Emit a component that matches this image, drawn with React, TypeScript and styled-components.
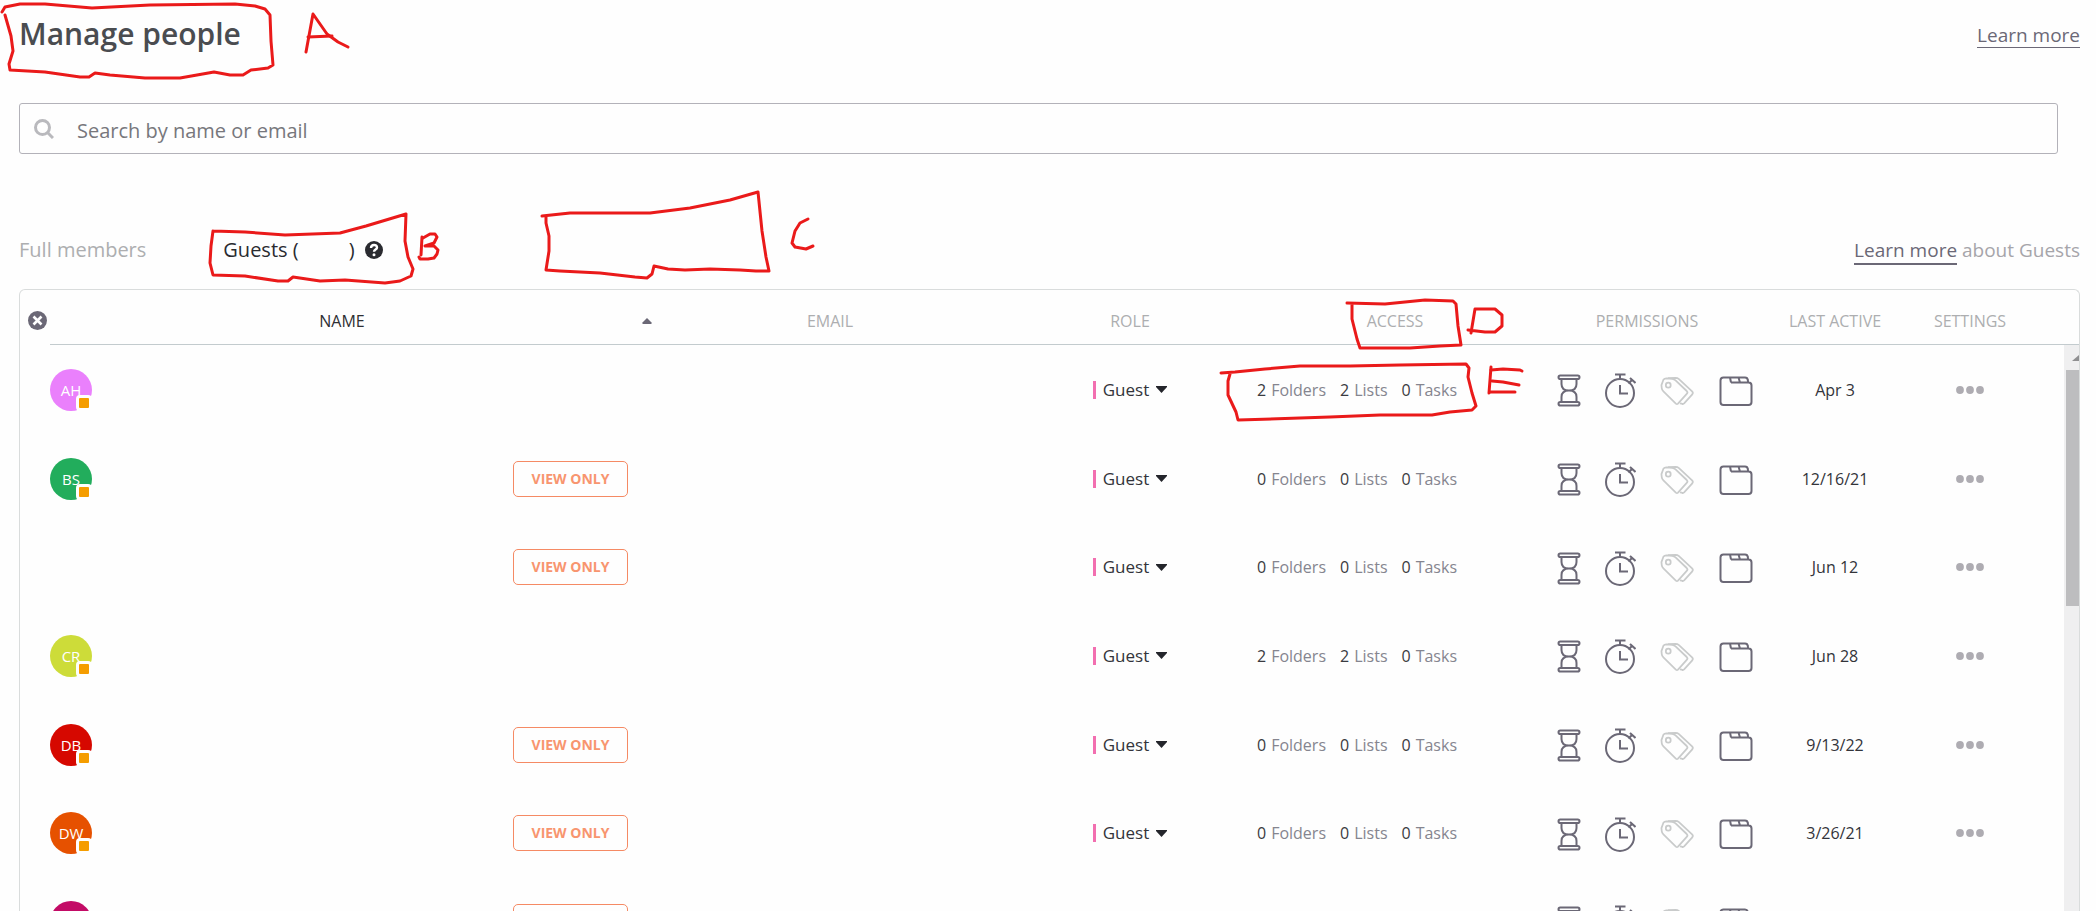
import React from "react";
import styled, { createGlobalStyle } from "styled-components";

const ink = "#6b6876";

const GlobalStyle = createGlobalStyle`
  * { box-sizing: border-box; }
  body { margin: 0; background: #fefefe; font-family: "Open Sans", "Noto Sans", sans-serif; color: #33343a; }
  button { display: flex; align-items: center; font: inherit; color: inherit; background: none; border: 0; padding: 0; cursor: pointer; }
`;

const Page = styled.div`
  position: relative;
  display: flex;
  flex-direction: column;
  height: 100vh;
  overflow: hidden;
  padding: 0 16px 0 19px;
`;

const Header = styled.header`
  display: flex;
  justify-content: space-between;
  align-items: center;
  height: 70px;
  flex: none;
`;

const Title = styled.h1`
  margin: 0;
  padding-bottom: 2px;
  font-size: 30px;
  line-height: 40px;
  font-weight: 600;
  color: #4a4c50;
`;

const LearnLink = styled.a<{ $weight: number }>`
  font-size: 19px;
  line-height: 24px;
  color: ${ink};
  text-decoration: none;
  border-bottom: ${(p) => p.$weight}px solid ${ink};
`;

const SearchBox = styled.label`
  display: flex;
  align-items: center;
  flex: none;
  gap: 23px;
  height: 51px;
  margin: 33px 22px 0 0;
  padding: 0 14px;
  border: 1px solid #b3b2b9;
  border-radius: 3px;
`;

const SearchInput = styled.input`
  flex: 1;
  border: 0;
  outline: 0;
  padding: 3px 0 0;
  background: none;
  font: inherit;
  font-size: 20px;
  &::placeholder { color: #77777c; opacity: 1; }
`;

const TabBar = styled.nav`
  display: flex;
  align-items: center;
  flex: none;
  height: 78px;
  margin-top: 57px;
  font-size: 20px;
  line-height: 28px;
`;

const Tab = styled.button<{ $active?: boolean }>`
  margin-right: 77px;
  color: ${(p) => (p.$active ? "#2a2b30" : "#adaeb0")};
`;

const HiddenCount = styled.span`
  width: 50px;
`;

const TabNote = styled.span`
  margin-left: auto;
  font-size: 19px;
  color: #a6a5aa;
`;

const Panel = styled.section`
  position: relative;
  flex: 1;
  min-height: 0;
  border: 1px solid #d9dcdc;
  border-bottom: 0;
  border-radius: 6px 6px 0 0;
`;

const ClearButton = styled.button`
  position: absolute;
  top: 21px;
  left: 8px;
`;

const Table = styled.table`
  display: block;
  height: 100%;
  overflow: hidden;
  margin-left: 30px;
`;

const THead = styled.thead`
  display: block;
`;

const TBody = styled.tbody`
  display: block;
`;

const Row = styled.tr`
  display: grid;
  grid-template-columns: minmax(0, 602fr) minmax(0, 356fr) 244px 286px 218px 158px 112px 53px;
  align-items: center;
  height: 89px;
  &:nth-child(3n) { height: 88px; }
`;

const HeadRow = styled(Row)`
  height: 55px;
  padding-top: 8px;
  border-bottom: 1px solid #c3cbce;
`;

const HeadCell = styled.th<{ $sorted?: boolean }>`
  display: flex;
  align-items: center;
  padding: 0;
  font-size: 16px;
  line-height: 20px;
  font-weight: 400;
  color: ${(p) => (p.$sorted ? "#2e2f33" : "#adaeb0")};
  svg { margin-left: 8px; }
`;

const HeadLabel = styled.span`
  flex: 1;
  text-align: center;
`;

const Cell = styled.td`
  display: flex;
  align-items: center;
  justify-content: center;
  padding: 0;
  font-size: 17px;
  line-height: 24px;
`;

const NameCell = styled(Cell)`
  justify-content: space-between;
  padding-right: 24px;
`;

const Avatar = styled.span<{ $color: string }>`
  position: relative;
  display: flex;
  align-items: center;
  justify-content: center;
  width: 42px;
  height: 42px;
  border-radius: 50%;
  background: ${(p) => p.$color};
  color: #fff;
  font-size: 15px;
`;

const Badge = styled.span`
  position: absolute;
  right: 0;
  bottom: 0;
  width: 16px;
  height: 16px;
  border: 3px solid #fefefe;
  border-radius: 4px;
  background: #f59d00;
`;

const ViewOnly = styled.button`
  justify-content: center;
  width: 115px;
  height: 36px;
  margin-left: auto;
  border: 1px solid #f58a64;
  border-radius: 5px;
  color: #f8956f;
  font-size: 14px;
  font-weight: 700;
`;

const RoleButton = styled.button`
  gap: 7px;
  &::before {
    content: "";
    width: 3px;
    height: 18px;
    background: #f26fb0;
  }
`;

const AccessCell = styled(Cell)`
  padding-right: 76px;
  font-size: 16px;
  gap: 14px;
`;

const AccessCount = styled.span`
  color: #85858f;
  b { font-weight: 400; color: #3a3b41; margin-right: 5px; }
`;

const PermissionsCell = styled(Cell)`
  display: grid;
  grid-template-columns: 25px 31px 35px 34px;
  column-gap: 24px;
  padding-left: 15px;
  button { justify-content: center; padding-top: 2px; }
`;

const DateCell = styled(Cell)`
  font-size: 16px;
`;

const Scrollbar = styled.div`
  position: absolute;
  top: 55px;
  right: 0;
  bottom: 0;
  width: 15px;
  padding-left: 2px;
  background: #efeff0;
`;

const ScrollArrow = styled.div`
  height: 25px;
  display: flex;
  justify-content: flex-end;
  padding-top: 10px;
`;

const ScrollThumb = styled.div`
  height: 236px;
  background: #bdbdbf;
`;

const Marks = styled.svg`
  position: absolute;
  top: 0;
  left: 0;
  pointer-events: none;
`;

const SearchIcon = () => (
  <svg width="20" height="20" viewBox="0 0 20 20" fill="none" stroke="#b9b9bd" strokeWidth="3">
    <circle cx="8.500" cy="8.500" r="7" />
    <path d="M13.500 13.500 19 19" />
  </svg>
);

const HelpIcon = () => (
  <svg width="18" height="18" viewBox="0 0 18 18">
    <circle cx="9" cy="9" r="9" fill="#2a2b30" />
    <path d="M6 7c0-4 6-4 6-.5C12 8.700 9 8.500 9 10.800" fill="none" stroke="#fff" strokeWidth="2.400" />
    <circle cx="9" cy="13.700" r="1.500" fill="#fff" />
  </svg>
);

const CloseIcon = () => (
  <svg width="19" height="19" viewBox="0 0 19 19">
    <circle cx="9.500" cy="9.500" r="9.500" fill={ink} />
    <path d="m5.500 5.500 8 8m0-8-8 8" stroke="#fff" strokeWidth="2.600" />
  </svg>
);

const SortIcon = () => (
  <svg width="10" height="6" viewBox="0 0 10 6">
    <path d="M5 0 9.500 4.500V6H.5V4.500z" fill={ink} />
  </svg>
);

const CaretIcon = () => (
  <svg width="11" height="7" viewBox="0 0 11 7">
    <path d="M0 0h11v1L5.500 7 0 1z" fill="#24252b" />
  </svg>
);

const HourglassIcon = () => (
  <svg width="24" height="33" viewBox="0 0 24 33" fill="none" stroke={ink} strokeWidth="2">
    <rect x="1.500" y="1.500" width="21" height="3.600" rx="1.800" />
    <rect x="1.500" y="28" width="21" height="3.600" rx="1.800" />
    <path d="M4.500 5.500V10q0 6.500 7.500 6.500t7.500-6.500V5.500M4.500 28v-5q0-6.500 7.500-6.500t7.500 6.500v5" />
  </svg>
);

const StopwatchIcon = () => (
  <svg width="31" height="35" viewBox="0 0 31 35" fill="none" stroke={ink} strokeWidth="2">
    <circle cx="15" cy="20" r="14" />
    <path d="M15 6V1.500M10 1.500h10.500M15 12v8.500h8M25 5l5.500 5M23.500 10.500l4-4" />
  </svg>
);

const TagsIcon = () => (
  <svg width="36" height="30" viewBox="0 0 36 30" fill="none" stroke="#c9cbcb" strokeWidth="1.800" strokeLinejoin="round">
    <path d="M1.500 9 3.500 3.500Q4.500 2 6.500 2l6 .5q2 .2 3.500 1.500l11.500 11q1.500 1.500 0 3l-9 10q-1 1-2.200 0L3.500 15.500Q2 14 1.800 12z" />
    <path d="m8 1.700 8-.2q2 0 3.500 1.300L33 15.500q1.500 1.500.2 3l-8.400 9.300q-1 1-2.300.2l-2-.2" />
    <circle cx="8.500" cy="9" r="2.500" />
  </svg>
);

const FolderIcon = () => (
  <svg width="34" height="30" viewBox="0 0 34 30" fill="none" stroke={ink} strokeWidth="2" strokeLinejoin="round">
    <path d="M12 6.500h17.500q3 0 3 3V26q0 3-3 3H4.500q-3 0-3-3V4.500q0-3 3-3H26q2.500 0 2.800 2.500l.4 2.500M12 6.500 11 1.500M21 6.500 19.500 1.500" />
  </svg>
);

const DotsIcon = () => (
  <svg width="28" height="8" viewBox="0 0 28 8" fill="#aeacb2">
    <circle cx="4" cy="4" r="3.900" />
    <circle cx="14" cy="4" r="3.900" />
    <circle cx="24" cy="4" r="3.900" />
  </svg>
);

const markStrokes = [
  "2,11 5,6 20,3 45,3 92,7 150,4 235,3 255,5 265,8 270,14 271,40 273,64 268,67 251,69 243,74 230,74 214,71 180,77 145,77 110,74 95,72 89,76 80,76 45,71 10,69 9,63 13,50 11,35 5,14",
  "306,51 313,13 327,33 338,41 348,46",
  "308,36 332,35",
  "213,230 245,231 285,234 340,232 366,225 406,213 405,240 408,256 413,268 411,275 400,280 385,282 345,279 320,280 293,276 288,280 278,280 245,275 213,274 210,262 211,245 213,230",
  "422,236 421,254",
  "423,237 430,233 435,233 437,236 434,242 425,245 434,245 438,249 437,253 434,257 428,258 420,258 419,256",
  "542,215 570,212 650,212 690,207 730,199 758,191 762,230 766,256 769,270 756,270 740,269 710,268 685,269 668,268 654,265 652,273 647,277 635,276 600,272 560,270 546,269 549,250 549,235 546,222 546,215",
  "808,218 800,222 795,230 792,242 795,246 806,248 813,245",
  "1347,302 1385,303 1425,299 1453,300 1456,303 1458,325 1461,344 1440,345 1410,347 1360,347 1357,338 1352,318 1352,303",
  "1471,332 1475,308 1495,308 1502,314 1502,325 1495,331 1485,331 1468,329",
  "1221,372 1235,371 1265,368 1300,365 1350,365 1400,364 1466,363 1469,367 1468,376 1472,392 1476,405 1472,409 1450,411 1432,414 1380,414 1330,416 1238,419 1236,411 1228,394 1228,380 1230,373",
  "1491,366 1489,392",
  "1491,369 1503,368 1520,369 1522,370",
  "1492,380 1503,381 1519,384",
  "1490,391 1515,391",
];

const AnnotationMarks = () => (
  <Marks width="1600" height="430" viewBox="0 -1 1600 430" fill="none" stroke="#ea1a1a" strokeWidth="3" strokeLinecap="round" strokeLinejoin="round" aria-hidden="true">
    {markStrokes.map((points) => (
      <polyline key={points} points={points} />
    ))}
  </Marks>
);

interface Access {
  folders: number;
  lists: number;
  tasks: number;
}

interface Guest {
  initials?: string;
  color?: string;
  viewOnly?: boolean;
  access: Access;
  lastActive: string;
}

const guests: Guest[] = [
  { initials: "AH", color: "#ea80fc", access: { folders: 2, lists: 2, tasks: 0 }, lastActive: "Apr 3" },
  { initials: "BS", color: "#22ad5c", viewOnly: true, access: { folders: 0, lists: 0, tasks: 0 }, lastActive: "12/16/21" },
  { viewOnly: true, access: { folders: 0, lists: 0, tasks: 0 }, lastActive: "Jun 12" },
  { initials: "CR", color: "#cddc39", access: { folders: 2, lists: 2, tasks: 0 }, lastActive: "Jun 28" },
  { initials: "DB", color: "#d60800", viewOnly: true, access: { folders: 0, lists: 0, tasks: 0 }, lastActive: "9/13/22" },
  { initials: "DW", color: "#e65100", viewOnly: true, access: { folders: 0, lists: 0, tasks: 0 }, lastActive: "3/26/21" },
];

const Permissions = () => (
  <PermissionsCell>
    <button aria-label="Time estimates"><HourglassIcon /></button>
    <button aria-label="Time tracking"><StopwatchIcon /></button>
    <button aria-label="Tags"><TagsIcon /></button>
    <button aria-label="Views"><FolderIcon /></button>
  </PermissionsCell>
);

const GuestRow = ({ guest }: { guest: Guest }) => (
  <Row>
    <NameCell>
      {guest.color && (
        <Avatar $color={guest.color}>
          {guest.initials}
          <Badge />
        </Avatar>
      )}
      {guest.viewOnly && <ViewOnly>VIEW ONLY</ViewOnly>}
    </NameCell>
    <Cell />
    <Cell>
      <RoleButton>
        Guest <CaretIcon />
      </RoleButton>
    </Cell>
    <AccessCell>
      <AccessCount><b>{guest.access.folders}</b>Folders</AccessCount>
      <AccessCount><b>{guest.access.lists}</b>Lists</AccessCount>
      <AccessCount><b>{guest.access.tasks}</b>Tasks</AccessCount>
    </AccessCell>
    <Permissions />
    <DateCell>{guest.lastActive}</DateCell>
    <Cell>
      <button aria-label="Settings"><DotsIcon /></button>
    </Cell>
  </Row>
);

const PendingRow = () => (
  <Row>
    <NameCell>
      <Avatar $color="#c30b66"><Badge /></Avatar>
      <ViewOnly aria-label="View only" />
    </NameCell>
    <Cell />
    <Cell />
    <Cell />
    <Permissions />
    <Cell />
    <Cell />
  </Row>
);

export default function App() {
  return (
    <>
      <GlobalStyle />
      <Page>
        <Header>
          <Title>Manage people</Title>
          <LearnLink href="#" $weight={1}>Learn more</LearnLink>
        </Header>
        <SearchBox>
          <SearchIcon />
          <SearchInput type="text" aria-label="Search by name or email" placeholder="Search by name or email" />
        </SearchBox>
        <TabBar>
          <Tab>Full members</Tab>
          <Tab $active>
            Guests (<HiddenCount />)&nbsp;&nbsp;<HelpIcon />
          </Tab>
          <TabNote>
            <LearnLink href="#" $weight={2}>Learn more</LearnLink> about Guests
          </TabNote>
        </TabBar>
        <Panel>
          <ClearButton aria-label="Clear sorting"><CloseIcon /></ClearButton>
          <Table>
            <THead>
              <HeadRow>
                <HeadCell $sorted><HeadLabel>NAME</HeadLabel><SortIcon /></HeadCell>
                {["EMAIL", "ROLE", "ACCESS", "PERMISSIONS", "LAST ACTIVE", "SETTINGS"].map((label) => (
                  <HeadCell key={label}><HeadLabel>{label}</HeadLabel></HeadCell>
                ))}
              </HeadRow>
            </THead>
            <TBody>
              {guests.map((guest, i) => (
                <GuestRow key={i} guest={guest} />
              ))}
              <PendingRow />
            </TBody>
          </Table>
          <Scrollbar>
            <ScrollArrow>
              <svg width="7" height="7" viewBox="0 0 7 7"><path d="M7 0v6H0z" fill="#8f8f91" /></svg>
            </ScrollArrow>
            <ScrollThumb />
          </Scrollbar>
        </Panel>
        <AnnotationMarks />
      </Page>
    </>
  );
}
